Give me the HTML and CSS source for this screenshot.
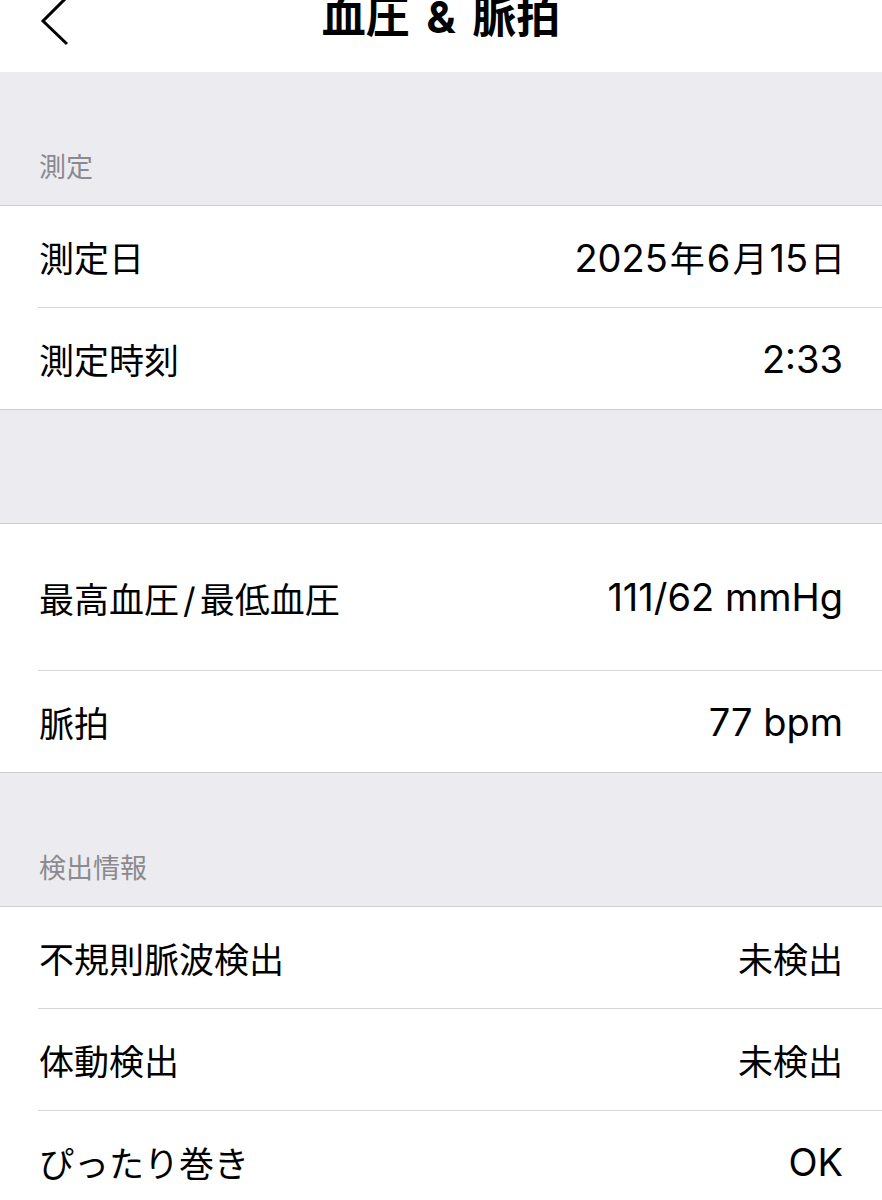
FILE: index.html
```html
<!DOCTYPE html>
<html lang="ja">
<head>
<meta charset="utf-8">
<title>血圧 &amp; 脈拍</title>
<link rel="stylesheet" href="styles.css">
</head>
<body>
<div class="screen">
  <header class="nav">
    <div class="nav-left">
      <svg class="back" width="32" height="50" viewBox="0 0 32 50" aria-hidden="true">
        <polyline points="27,2 4,25 28,48" fill="none" stroke="#000" stroke-width="3"/>
      </svg>
    </div>
    <h1 class="title">血圧 &amp; 脈拍</h1>
    <div class="nav-right"></div>
  </header>

  <div class="group-header">測定</div>
  <ul class="list">
    <li class="row"><span class="label">測定日</span><span class="value"><span class="num">2025</span><span class="kj">年</span><span class="num">6</span><span class="kj">月</span><span class="num">15</span><span class="kj">日</span></span></li>
    <li class="row"><span class="label">測定時刻</span><span class="value"><span class="num">2:33</span></span></li>
  </ul>

  <div class="group-header gap"></div>
  <ul class="list">
    <li class="row big"><span class="label">最高血圧<span class="slash">/</span>最低血圧</span><span class="value"><span class="num">111/62 mmHg</span></span></li>
    <li class="row"><span class="label">脈拍</span><span class="value"><span class="num">77 bpm</span></span></li>
  </ul>

  <div class="group-header">検出情報</div>
  <ul class="list">
    <li class="row"><span class="label">不規則脈波検出</span><span class="value">未検出</span></li>
    <li class="row"><span class="label">体動検出</span><span class="value">未検出</span></li>
    <li class="row"><span class="label">ぴったり巻き</span><span class="value"><span class="num">OK</span></span></li>
  </ul>
</div>
</body>
</html>
```
FILE: styles.css
```css
html, body {
  margin: 0;
  padding: 0;
  background: #ffffff;
}
body {
  font-family: Inter, "Noto Sans CJK JP", sans-serif;
  color: #000;
  overflow: hidden;
}
.screen {
  width: 882px;
  height: 1200px;
  overflow: hidden;
}
.nav {
  height: 72px;
  display: grid;
  grid-template-columns: 1fr auto 1fr;
  align-items: start;
  background: #fff;
}
.nav-left {
  padding-left: 39px;
}
.back {
  display: block;
  margin-top: -4px;
}
.title {
  margin: -6px 0 0 0;
  font-size: 44px;
  line-height: 46px;
  font-weight: 700;
  word-spacing: 6px;
  font-family: Inter, "Noto Sans CJK JP", sans-serif;
  white-space: nowrap;
}
.group-header {
  background: #ebebf0;
  height: 133px;
  box-sizing: border-box;
  display: flex;
  align-items: flex-end;
  padding: 0 0 24px 39px;
  font-size: 27px;
  line-height: 26px;
  color: #8a8a8f;
}
.group-header.gap {
  height: 113px;
}
.list {
  list-style: none;
  margin: 0;
  padding: 0;
  border-top: 1px solid #cdcdd1;
  border-bottom: 1px solid #cdcdd1;
  background: #fff;
}
.row {
  margin-left: 38px;
  padding: 0 39px 0 1px;
  height: 101px;
  display: flex;
  align-items: center;
  justify-content: space-between;
  font-size: 35px;
  border-bottom: 1px solid #d6d6da;
}
.row:last-child {
  border-bottom: none;
}
.row.big {
  height: 146px;
}
.label, .value {
  white-space: nowrap;
}
.num {
  font-size: 38px;
}
.kj {
  margin: 0 2px;
}
.kj:last-child {
  margin-right: -2px;
}
.slash {
  margin: 0 4px;
}
```
